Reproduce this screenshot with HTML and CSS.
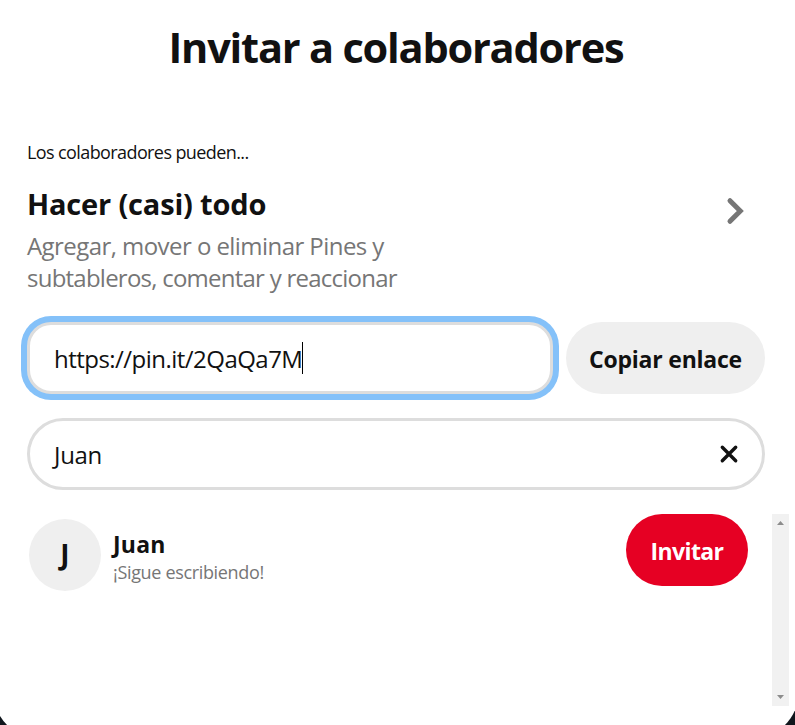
FILE: index.html
```
<!DOCTYPE html>
<html lang="es">
  <head>
    <meta charset="utf-8">
    <title>Invitar a colaboradores</title>
    <link rel="stylesheet" href="styles.css">
  </head>
  <body>
    <div class="modal">
      <h1 class="title">Invitar a colaboradores</h1>

      <div class="content">
        <p class="hint">Los colaboradores pueden...</p>
        <div class="permission">
          <div>
            <h2 class="permission-title">Hacer (casi) todo</h2>
            <p class="permission-text">Agregar, mover o eliminar Pines y<br><span class="second-line">subtableros, comentar y reaccionar</span></p>
          </div>
          <svg class="arrow" width="20" height="30" viewBox="0 0 20 30">
            <path d="M4 4.7 L14.3 15 L4 25.3" />
          </svg>
        </div>

        <div class="link-row">
          <div class="field link-field"><span class="link-text">https://pin.it/2QaQa7M</span><span class="caret"></span></div>
          <button class="button copy"><span>Copiar enlace</span></button>
        </div>

        <div class="field search-field">
          <span class="search-text">Juan</span>
          <svg class="clear" width="20" height="20" viewBox="0 0 20 20">
            <path d="M3.3 3.3 L16.7 16.7 M16.7 3.3 L3.3 16.7" />
          </svg>
        </div>
      </div>

      <div class="results">
        <div class="person">
          <div class="avatar">J</div>
          <div class="person-info">
            <div class="person-name">Juan</div>
            <div class="person-note">¡Sigue escribiendo!</div>
          </div>
          <button class="button invite"><span>Invitar</span></button>
        </div>
        <div class="scrollbar">
          <svg width="7" height="4" viewBox="0 0 7 4"><path d="M0 4 L3.5 0 L7 4 Z" /></svg>
          <svg width="7" height="4" viewBox="0 0 7 4"><path d="M0 0 L3.5 4 L7 0 Z" /></svg>
        </div>
      </div>
    </div>
  </body>
</html>
```
FILE: styles.css
```
* {
  box-sizing: border-box;
}

html,
body {
  height: 725px;
  overflow: hidden;
}

body {
  margin: 0;
  background-color: #10161c;
  font-family: "Open Sans", "Noto Sans", sans-serif;
  color: #111;
}

h1,
h2,
p {
  margin: 0;
}

/* the dialog is a bit larger than the window */
.modal {
  width: 806px;
  height: 739px;
  margin-left: -7px;
  padding: 20px 10px 0 34px;
  background-color: #fff;
  border-radius: 0 0 48px 48px;
}

.title {
  margin-right: 24px;
  font-size: 41.5px;
  line-height: 55px;
  letter-spacing: -1.2px;
  text-align: center;
  white-space: nowrap;
}

.content {
  width: 738px;
}

.hint {
  margin-top: 65px;
  font-size: 18px;
  line-height: 24px;
  letter-spacing: -0.6px;
}

.permission {
  display: flex;
  justify-content: space-between;
  align-items: flex-start;
  margin-top: 20px;
  padding-right: 19px;
}

.permission-title {
  font-size: 29px;
  line-height: 40px;
  letter-spacing: -0.17px;
}

.permission-text {
  margin-top: 6px;
  font-size: 24px;
  line-height: 32px;
  letter-spacing: -0.56px;
  color: #767676;
}

.second-line {
  letter-spacing: -0.76px;
}

.arrow {
  margin-top: 12px;
  fill: none;
  stroke: #767676;
  stroke-width: 5;
  stroke-linecap: round;
}

.link-row {
  display: flex;
  gap: 13px;
  margin-top: 28px;
}

.field {
  display: flex;
  align-items: center;
  height: 72px;
  padding: 0 24px;
  border: 3px solid #ddd;
  font-size: 24px;
  background-color: #fff;
}

.link-field {
  width: 526px;
  border-radius: 24px;
  box-shadow: 0 0 0 6px #84c1f9;
}

.link-text {
  letter-spacing: -0.53px;
}

.caret {
  width: 1px;
  height: 32px;
  background-color: #000;
}

.search-field {
  justify-content: space-between;
  margin-top: 24px;
  border-radius: 36px;
}

.search-text {
  letter-spacing: -0.3px;
}

.clear {
  margin-right: -1px;
  stroke: #111;
  stroke-width: 3.4;
  stroke-linecap: round;
}

.button {
  height: 72px;
  padding: 2px 0 0;
  border: none;
  border-radius: 36px;
  font-family: inherit;
  font-size: 23px;
  font-weight: bold;
  letter-spacing: -0.22px;
  white-space: nowrap;
}

.copy {
  width: 199px;
  background-color: #efefef;
  color: #111;
}

.results {
  display: flex;
  justify-content: space-between;
  height: 192px;
  margin-top: 24px;
}

.person {
  display: flex;
  width: 721px;
  padding-left: 2px;
}

.avatar {
  width: 72px;
  height: 72px;
  margin-top: 5px;
  border-radius: 50%;
  background-color: #efefef;
  font-size: 28px;
  font-weight: bold;
  line-height: 71px;
  text-align: center;
}

.person-info {
  flex: 1;
  margin: 15px 0 0 12px;
}

.person-name {
  font-size: 23px;
  font-weight: bold;
  line-height: 31px;
  letter-spacing: 0.25px;
}

.person-note {
  font-size: 18px;
  line-height: 24px;
  letter-spacing: -0.34px;
  color: #767676;
}

.invite {
  width: 122px;
  background-color: #e60023;
  color: #fff;
  letter-spacing: -0.6px;
}

.scrollbar {
  display: flex;
  flex-direction: column;
  justify-content: space-between;
  align-items: center;
  width: 17px;
  padding: 7px 0;
  background-color: #f1f1f1;
  fill: #8c8c8c;
}
```
